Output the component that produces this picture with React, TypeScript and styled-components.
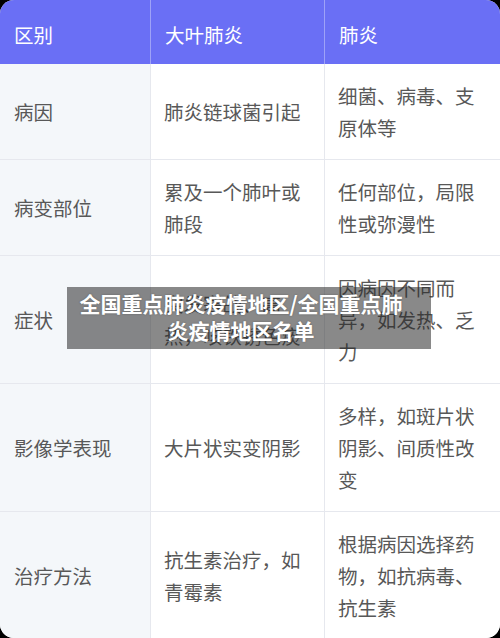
import React from "react";
import styled, {createGlobalStyle} from "styled-components";

const GlobalStyle = createGlobalStyle`
  html, body {
    margin: 0;
    padding: 0;
    background: #000;
  }
  body {
    font-family: "Noto Sans CJK SC", "Noto Sans", sans-serif;
  }
`;

const Card = styled.section`
    position: relative;
    width: 500px;
    height: 638px;
    overflow: hidden;
    border-radius: 14px;
    background: #fff;
`;

const Table = styled.div`
    display: grid;
    grid-template-columns: 151px 174px 1fr;
`;

const HeadCell = styled.div<{ last?: boolean }>`
    display: flex;
    align-items: center;
    height: 64px;
    padding: 4px 13px 0 14px;
    box-sizing: border-box;
    background: #6a6ff5;
    color: #fff;
    font-size: 19.5px;
    border-right: ${p => p.last ? 'none' : '1px solid #9ea2f8'};
`;

const Cell = styled.div<{ first?: boolean; last?: boolean }>`
    display: flex;
    align-items: center;
    padding: 15.5px 13px;
    box-sizing: border-box;
    background: ${p => p.first ? '#f4f7fa' : '#fff'};
    color: #585858;
    font-size: 19.5px;
    line-height: 32px;
    border-bottom: 1px solid #e6e8ee;
    border-right: ${p => p.last ? 'none' : '1px solid #e6e8ee'};
    ${p => p.first && 'padding-left: 14px;'}
`;

const Banner = styled.div`
    position: absolute;
    left: 67px;
    top: 287px;
    width: 364px;
    box-sizing: border-box;
    padding: 3px 26px 5px 10px;
    background: rgba(40, 40, 40, 0.55);
    color: #fff;
    font-size: 21px;
    font-weight: 700;
    line-height: 27px;
    text-align: center;
    text-shadow: 0 0 2px rgba(0, 0, 0, 0.3);
`;

const headers = ['区别', '大叶肺炎', '肺炎']

const rows = [
    ['病因', '肺炎链球菌引起', '细菌、病毒、支原体等'],
    ['病变部位', '累及一个肺叶或肺段', '任何部位，局限性或弥漫性'],
    ['症状', '突发寒战、高热，咳铁锈色痰', '因病因不同而异，如发热、乏力'],
    ['影像学表现', '大片状实变阴影', '多样，如斑片状阴影、间质性改变'],
    ['治疗方法', '抗生素治疗，如青霉素', '根据病因选择药物，如抗病毒、抗生素'],
]

const App: React.FC = () => {
    return (
        <Card>
            <GlobalStyle/>
            <Table>
                {headers.map((h, i) => (
                    <HeadCell key={h} last={i === headers.length - 1}>{h}</HeadCell>
                ))}
                {rows.map(row => row.map((text, i) => (
                    <Cell key={row[0] + i} first={i === 0} last={i === row.length - 1}>{text}</Cell>
                )))}
            </Table>
            <Banner>全国重点肺炎疫情地区/全国重点肺炎疫情地区名单</Banner>
        </Card>
    )
}

export default App
